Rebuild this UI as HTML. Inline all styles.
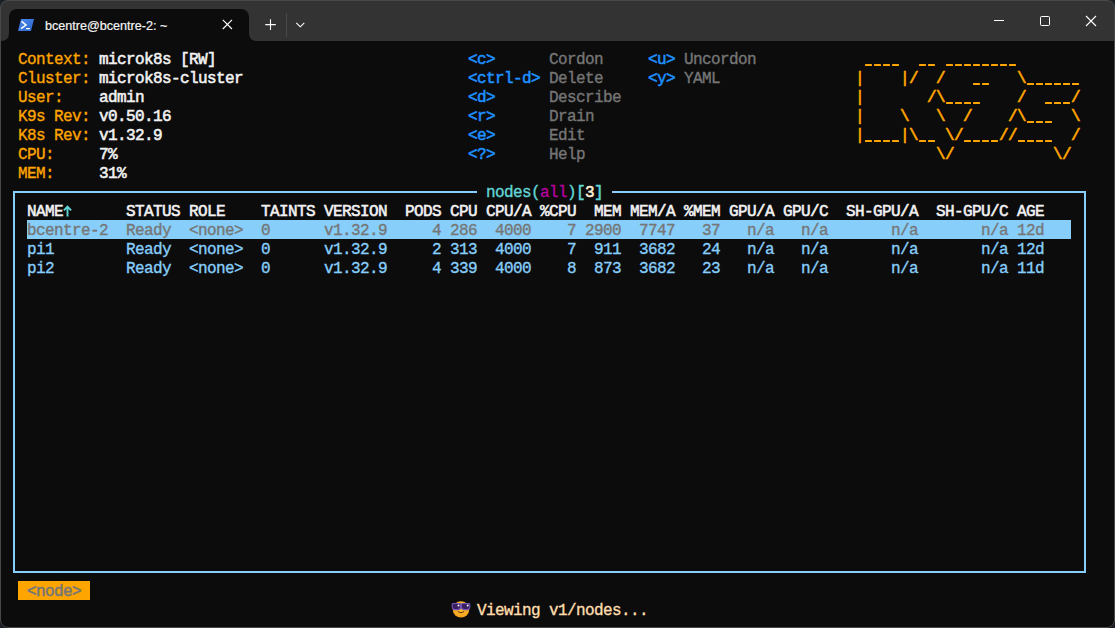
<!DOCTYPE html>
<html><head><meta charset="utf-8"><style>
html,body{margin:0;padding:0;width:1115px;height:628px;overflow:hidden;background:#1b1f26;}
#win{position:absolute;left:0;top:0;width:1115px;height:628px;border-radius:8px;overflow:hidden;background:#0c0c0c;}
#frame{position:absolute;left:0;top:0;width:1115px;height:628px;box-sizing:border-box;border-radius:8px;border:1px solid #46484c;}
#tb{position:absolute;left:0;top:0;width:100%;height:41px;background:#333333;}
#tab{position:absolute;left:9px;top:9px;width:240px;height:32px;background:#0c0c0c;border-radius:8px 8px 0 0;}
.flare{position:absolute;width:8px;height:8px;top:33px;}
#term{position:absolute;left:9px;top:49px;width:1080px;height:570px;font-family:"Liberation Mono",monospace;font-size:16px;line-height:19px;letter-spacing:-0.6px;}
#term span{position:absolute;white-space:pre;height:19px;margin-top:2px;-webkit-text-stroke:0.35px currentColor;}
#term .sel{position:absolute;}
.ln{position:absolute;background:#87cefa;}
.tt{position:absolute;font-family:"Liberation Sans",sans-serif;font-size:12.6px;color:#f4f4f4;white-space:pre;-webkit-text-stroke:0.2px #f4f4f4;}
svg{position:absolute;overflow:visible;}
</style></head><body>
<div id="win">
 <div id="tb"></div>
 <div id="tab"></div>
 <svg class="flare" style="left:1px" width="8" height="8"><path d="M0 8 Q8 8 8 0 V8 Z" fill="#0c0c0c"/></svg>
 <svg class="flare" style="left:249px" width="8" height="8"><path d="M0 0 Q0 8 8 8 H0 Z" fill="#0c0c0c"/></svg>
 <svg style="left:18px;top:19px" width="16" height="12" viewBox="0 0 16 12">
  <defs><linearGradient id="psg" x1="0" y1="0" x2="1" y2="1"><stop offset="0" stop-color="#4a8cf0"/><stop offset="1" stop-color="#2a62c8"/></linearGradient></defs>
  <path d="M3 0 H16 L13 12 H0 Z" fill="url(#psg)"/>
  <path d="M3.6 2.4 L8 6 L3 9.6" stroke="#fff" stroke-width="1.5" fill="none"/>
  <path d="M8 9.7 H12" stroke="#fff" stroke-width="1.3"/>
 </svg>
 <div class="tt" style="left:45px;top:19px">bcentre@bcentre-2: ~</div>
 <svg style="left:222px;top:19px" width="11" height="11" viewBox="0 0 11 11"><path d="M0.8 0.8 L10 10 M10 0.8 L0.8 10" stroke="#fff" stroke-width="1.1"/></svg>
 <svg style="left:265px;top:19px" width="11" height="11" viewBox="0 0 11 11"><path d="M5.5 0.2 V11 M0.3 5.6 H10.8" stroke="#fff" stroke-width="1.1"/></svg>
 <div style="position:absolute;left:286px;top:13px;width:1px;height:24px;background:#4a4a4a"></div>
 <svg style="left:296px;top:22px" width="9" height="6" viewBox="0 0 9 6"><path d="M0.3 0.8 L4.3 4.8 L8.3 0.8" stroke="#fff" stroke-width="1.1" fill="none"/></svg>
 <div style="position:absolute;left:994px;top:20px;width:10px;height:1px;background:#fff"></div>
 <div style="position:absolute;left:1040px;top:16px;width:10px;height:10px;box-sizing:border-box;border:1px solid #fff;border-radius:1.5px"></div>
 <svg style="left:1085px;top:15px" width="12" height="12" viewBox="0 0 12 12"><path d="M1 1 L11 11 M11 1 L1 11" stroke="#fff" stroke-width="1.1"/></svg>
 <div class="ln" style="left:13px;top:191px;width:464px;height:2px"></div>
 <div class="ln" style="left:612px;top:191px;width:473px;height:2px"></div>
 <div class="ln" style="left:13px;top:191px;width:2px;height:382px"></div>
 <div class="ln" style="left:1084px;top:191px;width:2px;height:382px"></div>
 <div class="ln" style="left:13px;top:571px;width:1073px;height:2px"></div>
 <div id="term">
<span style="left:9px;top:0px;color:#ffa500;">Context:</span>
<span style="left:90px;top:0px;color:#f2f2f2;font-weight:normal;-webkit-text-stroke:0.55px currentColor;">microk8s [RW]</span>
<span style="left:9px;top:19px;color:#ffa500;">Cluster:</span>
<span style="left:90px;top:19px;color:#f2f2f2;font-weight:normal;-webkit-text-stroke:0.55px currentColor;">microk8s-cluster</span>
<span style="left:9px;top:38px;color:#ffa500;">User:</span>
<span style="left:90px;top:38px;color:#f2f2f2;font-weight:normal;-webkit-text-stroke:0.55px currentColor;">admin</span>
<span style="left:9px;top:57px;color:#ffa500;">K9s Rev:</span>
<span style="left:90px;top:57px;color:#f2f2f2;font-weight:normal;-webkit-text-stroke:0.55px currentColor;">v0.50.16</span>
<span style="left:9px;top:76px;color:#ffa500;">K8s Rev:</span>
<span style="left:90px;top:76px;color:#f2f2f2;font-weight:normal;-webkit-text-stroke:0.55px currentColor;">v1.32.9</span>
<span style="left:9px;top:95px;color:#ffa500;">CPU:</span>
<span style="left:90px;top:95px;color:#f2f2f2;font-weight:normal;-webkit-text-stroke:0.55px currentColor;">7%</span>
<span style="left:9px;top:114px;color:#ffa500;">MEM:</span>
<span style="left:90px;top:114px;color:#f2f2f2;font-weight:normal;-webkit-text-stroke:0.55px currentColor;">31%</span>
<span style="left:459px;top:0px;color:#1e90ff;font-weight:normal;-webkit-text-stroke:0.55px currentColor;">&lt;c&gt;</span>
<span style="left:540px;top:0px;color:#767676;">Cordon</span>
<span style="left:459px;top:19px;color:#1e90ff;font-weight:normal;-webkit-text-stroke:0.55px currentColor;">&lt;ctrl-d&gt;</span>
<span style="left:540px;top:19px;color:#767676;">Delete</span>
<span style="left:459px;top:38px;color:#1e90ff;font-weight:normal;-webkit-text-stroke:0.55px currentColor;">&lt;d&gt;</span>
<span style="left:540px;top:38px;color:#767676;">Describe</span>
<span style="left:459px;top:57px;color:#1e90ff;font-weight:normal;-webkit-text-stroke:0.55px currentColor;">&lt;r&gt;</span>
<span style="left:540px;top:57px;color:#767676;">Drain</span>
<span style="left:459px;top:76px;color:#1e90ff;font-weight:normal;-webkit-text-stroke:0.55px currentColor;">&lt;e&gt;</span>
<span style="left:540px;top:76px;color:#767676;">Edit</span>
<span style="left:459px;top:95px;color:#1e90ff;font-weight:normal;-webkit-text-stroke:0.55px currentColor;">&lt;?&gt;</span>
<span style="left:540px;top:95px;color:#767676;">Help</span>
<span style="left:639px;top:0px;color:#1e90ff;font-weight:normal;-webkit-text-stroke:0.55px currentColor;">&lt;u&gt;</span>
<span style="left:675px;top:0px;color:#767676;">Uncordon</span>
<span style="left:639px;top:19px;color:#1e90ff;font-weight:normal;-webkit-text-stroke:0.55px currentColor;">&lt;y&gt;</span>
<span style="left:675px;top:19px;color:#767676;">YAML</span>
<span style="left:846px;top:0px;color:#ffa500;-webkit-text-stroke:0.6px currentColor;">                         </span>
<div class="sel" style="left:855.6px;top:15px;width:7.8px;height:2px;background:#ffa500;border-radius:0.6px"></div>
<div class="sel" style="left:864.6px;top:15px;width:7.8px;height:2px;background:#ffa500;border-radius:0.6px"></div>
<div class="sel" style="left:873.6px;top:15px;width:7.8px;height:2px;background:#ffa500;border-radius:0.6px"></div>
<div class="sel" style="left:882.6px;top:15px;width:7.8px;height:2px;background:#ffa500;border-radius:0.6px"></div>
<div class="sel" style="left:909.6px;top:15px;width:7.8px;height:2px;background:#ffa500;border-radius:0.6px"></div>
<div class="sel" style="left:918.6px;top:15px;width:7.8px;height:2px;background:#ffa500;border-radius:0.6px"></div>
<div class="sel" style="left:936.6px;top:15px;width:7.8px;height:2px;background:#ffa500;border-radius:0.6px"></div>
<div class="sel" style="left:945.6px;top:15px;width:7.8px;height:2px;background:#ffa500;border-radius:0.6px"></div>
<div class="sel" style="left:954.6px;top:15px;width:7.8px;height:2px;background:#ffa500;border-radius:0.6px"></div>
<div class="sel" style="left:963.6px;top:15px;width:7.8px;height:2px;background:#ffa500;border-radius:0.6px"></div>
<div class="sel" style="left:972.6px;top:15px;width:7.8px;height:2px;background:#ffa500;border-radius:0.6px"></div>
<div class="sel" style="left:981.6px;top:15px;width:7.8px;height:2px;background:#ffa500;border-radius:0.6px"></div>
<div class="sel" style="left:990.6px;top:15px;width:7.8px;height:2px;background:#ffa500;border-radius:0.6px"></div>
<div class="sel" style="left:999.6px;top:15px;width:7.8px;height:2px;background:#ffa500;border-radius:0.6px"></div>
<span style="left:846px;top:19px;color:#ffa500;-webkit-text-stroke:0.6px currentColor;">|    |/  /        \      </span>
<div class="sel" style="left:963.6px;top:34px;width:7.8px;height:2px;background:#ffa500;border-radius:0.6px"></div>
<div class="sel" style="left:972.6px;top:34px;width:7.8px;height:2px;background:#ffa500;border-radius:0.6px"></div>
<div class="sel" style="left:1017.6px;top:34px;width:7.8px;height:2px;background:#ffa500;border-radius:0.6px"></div>
<div class="sel" style="left:1026.6px;top:34px;width:7.8px;height:2px;background:#ffa500;border-radius:0.6px"></div>
<div class="sel" style="left:1035.6px;top:34px;width:7.8px;height:2px;background:#ffa500;border-radius:0.6px"></div>
<div class="sel" style="left:1044.6px;top:34px;width:7.8px;height:2px;background:#ffa500;border-radius:0.6px"></div>
<div class="sel" style="left:1053.6px;top:34px;width:7.8px;height:2px;background:#ffa500;border-radius:0.6px"></div>
<div class="sel" style="left:1062.6px;top:34px;width:7.8px;height:2px;background:#ffa500;border-radius:0.6px"></div>
<span style="left:846px;top:38px;color:#ffa500;-webkit-text-stroke:0.6px currentColor;">|       /\        /     /</span>
<div class="sel" style="left:936.6px;top:53px;width:7.8px;height:2px;background:#ffa500;border-radius:0.6px"></div>
<div class="sel" style="left:945.6px;top:53px;width:7.8px;height:2px;background:#ffa500;border-radius:0.6px"></div>
<div class="sel" style="left:954.6px;top:53px;width:7.8px;height:2px;background:#ffa500;border-radius:0.6px"></div>
<div class="sel" style="left:963.6px;top:53px;width:7.8px;height:2px;background:#ffa500;border-radius:0.6px"></div>
<div class="sel" style="left:1035.6px;top:53px;width:7.8px;height:2px;background:#ffa500;border-radius:0.6px"></div>
<div class="sel" style="left:1044.6px;top:53px;width:7.8px;height:2px;background:#ffa500;border-radius:0.6px"></div>
<div class="sel" style="left:1053.6px;top:53px;width:7.8px;height:2px;background:#ffa500;border-radius:0.6px"></div>
<span style="left:846px;top:57px;color:#ffa500;-webkit-text-stroke:0.6px currentColor;">|    \   \  /    /\     \</span>
<div class="sel" style="left:1017.6px;top:72px;width:7.8px;height:2px;background:#ffa500;border-radius:0.6px"></div>
<div class="sel" style="left:1026.6px;top:72px;width:7.8px;height:2px;background:#ffa500;border-radius:0.6px"></div>
<div class="sel" style="left:1035.6px;top:72px;width:7.8px;height:2px;background:#ffa500;border-radius:0.6px"></div>
<span style="left:846px;top:76px;color:#ffa500;-webkit-text-stroke:0.6px currentColor;">|    |\   \/    //      /</span>
<div class="sel" style="left:855.6px;top:91px;width:7.8px;height:2px;background:#ffa500;border-radius:0.6px"></div>
<div class="sel" style="left:864.6px;top:91px;width:7.8px;height:2px;background:#ffa500;border-radius:0.6px"></div>
<div class="sel" style="left:873.6px;top:91px;width:7.8px;height:2px;background:#ffa500;border-radius:0.6px"></div>
<div class="sel" style="left:882.6px;top:91px;width:7.8px;height:2px;background:#ffa500;border-radius:0.6px"></div>
<div class="sel" style="left:909.6px;top:91px;width:7.8px;height:2px;background:#ffa500;border-radius:0.6px"></div>
<div class="sel" style="left:918.6px;top:91px;width:7.8px;height:2px;background:#ffa500;border-radius:0.6px"></div>
<div class="sel" style="left:954.6px;top:91px;width:7.8px;height:2px;background:#ffa500;border-radius:0.6px"></div>
<div class="sel" style="left:963.6px;top:91px;width:7.8px;height:2px;background:#ffa500;border-radius:0.6px"></div>
<div class="sel" style="left:972.6px;top:91px;width:7.8px;height:2px;background:#ffa500;border-radius:0.6px"></div>
<div class="sel" style="left:981.6px;top:91px;width:7.8px;height:2px;background:#ffa500;border-radius:0.6px"></div>
<div class="sel" style="left:1008.6px;top:91px;width:7.8px;height:2px;background:#ffa500;border-radius:0.6px"></div>
<div class="sel" style="left:1017.6px;top:91px;width:7.8px;height:2px;background:#ffa500;border-radius:0.6px"></div>
<div class="sel" style="left:1026.6px;top:91px;width:7.8px;height:2px;background:#ffa500;border-radius:0.6px"></div>
<div class="sel" style="left:1035.6px;top:91px;width:7.8px;height:2px;background:#ffa500;border-radius:0.6px"></div>
<span style="left:846px;top:95px;color:#ffa500;-webkit-text-stroke:0.6px currentColor;">         \/           \/ </span>
<span style="left:468px;top:133px;color:#61d6d6;"> nodes</span>
<span style="left:522px;top:133px;color:#61d6d6;">(</span>
<span style="left:531px;top:133px;color:#b4009e;">all</span>
<span style="left:558px;top:133px;color:#61d6d6;">)</span>
<span style="left:567px;top:133px;color:#61d6d6;font-weight:normal;-webkit-text-stroke:0.55px currentColor;">[</span>
<span style="left:576px;top:133px;color:#ffefd5;font-weight:normal;-webkit-text-stroke:0.55px currentColor;">3</span>
<span style="left:585px;top:133px;color:#61d6d6;font-weight:normal;-webkit-text-stroke:0.55px currentColor;">]</span>
<span style="left:18px;top:152px;color:#f2f2f2;font-weight:normal;-webkit-text-stroke:0.55px currentColor;">NAME</span>
<span style="left:117px;top:152px;color:#f2f2f2;font-weight:normal;-webkit-text-stroke:0.55px currentColor;">STATUS</span>
<span style="left:180px;top:152px;color:#f2f2f2;font-weight:normal;-webkit-text-stroke:0.55px currentColor;">ROLE</span>
<span style="left:252px;top:152px;color:#f2f2f2;font-weight:normal;-webkit-text-stroke:0.55px currentColor;">TAINTS</span>
<span style="left:315px;top:152px;color:#f2f2f2;font-weight:normal;-webkit-text-stroke:0.55px currentColor;">VERSION</span>
<span style="left:396px;top:152px;color:#f2f2f2;font-weight:normal;-webkit-text-stroke:0.55px currentColor;">PODS</span>
<span style="left:441px;top:152px;color:#f2f2f2;font-weight:normal;-webkit-text-stroke:0.55px currentColor;">CPU</span>
<span style="left:477px;top:152px;color:#f2f2f2;font-weight:normal;-webkit-text-stroke:0.55px currentColor;">CPU/A</span>
<span style="left:531px;top:152px;color:#f2f2f2;font-weight:normal;-webkit-text-stroke:0.55px currentColor;">%CPU</span>
<span style="left:585px;top:152px;color:#f2f2f2;font-weight:normal;-webkit-text-stroke:0.55px currentColor;">MEM</span>
<span style="left:621px;top:152px;color:#f2f2f2;font-weight:normal;-webkit-text-stroke:0.55px currentColor;">MEM/A</span>
<span style="left:675px;top:152px;color:#f2f2f2;font-weight:normal;-webkit-text-stroke:0.55px currentColor;">%MEM</span>
<span style="left:720px;top:152px;color:#f2f2f2;font-weight:normal;-webkit-text-stroke:0.55px currentColor;">GPU/A</span>
<span style="left:774px;top:152px;color:#f2f2f2;font-weight:normal;-webkit-text-stroke:0.55px currentColor;">GPU/C</span>
<span style="left:837px;top:152px;color:#f2f2f2;font-weight:normal;-webkit-text-stroke:0.55px currentColor;">SH-GPU/A</span>
<span style="left:927px;top:152px;color:#f2f2f2;font-weight:normal;-webkit-text-stroke:0.55px currentColor;">SH-GPU/C</span>
<span style="left:1008px;top:152px;color:#f2f2f2;font-weight:normal;-webkit-text-stroke:0.55px currentColor;">AGE</span>
<svg style="position:absolute;left:54px;top:155.5px" width="9" height="12" viewBox="0 0 9 12"><path d="M4.5 11.5 V1.8 M0.9 5.4 L4.5 1.6 L8.1 5.4" stroke="#61d6d6" stroke-width="1.9" fill="none"/></svg>
<div class="sel" style="left:18px;top:171px;width:1044px;height:19px;background:#87cefa"></div>
<span style="left:18px;top:171px;color:#767676;">bcentre-2</span>
<span style="left:117px;top:171px;color:#767676;">Ready</span>
<span style="left:180px;top:171px;color:#767676;">&lt;none&gt;</span>
<span style="left:252px;top:171px;color:#767676;">0</span>
<span style="left:315px;top:171px;color:#767676;">v1.32.9</span>
<span style="left:423px;top:171px;color:#767676;">4</span>
<span style="left:441px;top:171px;color:#767676;">286</span>
<span style="left:486px;top:171px;color:#767676;">4000</span>
<span style="left:558px;top:171px;color:#767676;">7</span>
<span style="left:576px;top:171px;color:#767676;">2900</span>
<span style="left:630px;top:171px;color:#767676;">7747</span>
<span style="left:693px;top:171px;color:#767676;">37</span>
<span style="left:738px;top:171px;color:#767676;">n/a</span>
<span style="left:792px;top:171px;color:#767676;">n/a</span>
<span style="left:882px;top:171px;color:#767676;">n/a</span>
<span style="left:972px;top:171px;color:#767676;">n/a</span>
<span style="left:1008px;top:171px;color:#767676;">12d</span>
<span style="left:18px;top:190px;color:#87cefa;">pi1</span>
<span style="left:117px;top:190px;color:#87cefa;">Ready</span>
<span style="left:180px;top:190px;color:#87cefa;">&lt;none&gt;</span>
<span style="left:252px;top:190px;color:#87cefa;">0</span>
<span style="left:315px;top:190px;color:#87cefa;">v1.32.9</span>
<span style="left:423px;top:190px;color:#87cefa;">2</span>
<span style="left:441px;top:190px;color:#87cefa;">313</span>
<span style="left:486px;top:190px;color:#87cefa;">4000</span>
<span style="left:558px;top:190px;color:#87cefa;">7</span>
<span style="left:585px;top:190px;color:#87cefa;">911</span>
<span style="left:630px;top:190px;color:#87cefa;">3682</span>
<span style="left:693px;top:190px;color:#87cefa;">24</span>
<span style="left:738px;top:190px;color:#87cefa;">n/a</span>
<span style="left:792px;top:190px;color:#87cefa;">n/a</span>
<span style="left:882px;top:190px;color:#87cefa;">n/a</span>
<span style="left:972px;top:190px;color:#87cefa;">n/a</span>
<span style="left:1008px;top:190px;color:#87cefa;">12d</span>
<span style="left:18px;top:209px;color:#87cefa;">pi2</span>
<span style="left:117px;top:209px;color:#87cefa;">Ready</span>
<span style="left:180px;top:209px;color:#87cefa;">&lt;none&gt;</span>
<span style="left:252px;top:209px;color:#87cefa;">0</span>
<span style="left:315px;top:209px;color:#87cefa;">v1.32.9</span>
<span style="left:423px;top:209px;color:#87cefa;">4</span>
<span style="left:441px;top:209px;color:#87cefa;">339</span>
<span style="left:486px;top:209px;color:#87cefa;">4000</span>
<span style="left:558px;top:209px;color:#87cefa;">8</span>
<span style="left:585px;top:209px;color:#87cefa;">873</span>
<span style="left:630px;top:209px;color:#87cefa;">3682</span>
<span style="left:693px;top:209px;color:#87cefa;">23</span>
<span style="left:738px;top:209px;color:#87cefa;">n/a</span>
<span style="left:792px;top:209px;color:#87cefa;">n/a</span>
<span style="left:882px;top:209px;color:#87cefa;">n/a</span>
<span style="left:972px;top:209px;color:#87cefa;">n/a</span>
<span style="left:1008px;top:209px;color:#87cefa;">11d</span>
<div class="sel" style="left:9px;top:532px;width:72px;height:19px;background:#ffa500"></div>
<span style="left:18px;top:532px;color:#767676;font-weight:normal;-webkit-text-stroke:0.55px currentColor;">&lt;node&gt;</span>
<span style="left:468px;top:551px;color:#ffdead;">Viewing v1/nodes...</span>
 </div>
 <svg style="left:451px;top:600px" width="20" height="20" viewBox="0 0 20 20">
<defs><radialGradient id="fg" cx="50%" cy="40%" r="60%"><stop offset="0" stop-color="#fcc23a"/><stop offset="1" stop-color="#f3a21a"/></radialGradient></defs>
<circle cx="10" cy="9.4" r="8.2" fill="url(#fg)"/>
<path d="M1.2 4.2 Q1.2 3.5 2 3.5 H8.6 Q9.6 3.5 9.6 4.5 V6.9 Q9.6 9.6 6.4 9.6 H4.4 Q1.2 9.6 1.2 6.8 Z" fill="#3a2060" stroke="#7152b6" stroke-width="1.1"/>
<path d="M18.8 4.2 Q18.8 3.5 18 3.5 H11.4 Q10.4 3.5 10.4 4.5 V6.9 Q10.4 9.6 13.6 9.6 H15.6 Q18.8 9.6 18.8 6.8 Z" fill="#3a2060" stroke="#7152b6" stroke-width="1.1"/>
<path d="M9.3 4.5 H10.7" stroke="#7152b6" stroke-width="1.2"/>
<circle cx="7.5" cy="5.4" r="1" fill="#ffffff"/>
<circle cx="16.7" cy="5.4" r="1" fill="#ffffff"/>
<path d="M7.3 11.6 Q10 13.6 12.7 11.6" stroke="#6a3a12" stroke-width="1.1" fill="none" stroke-linecap="round"/>
</svg>
</div>
<div id="frame"></div>
</body></html>
